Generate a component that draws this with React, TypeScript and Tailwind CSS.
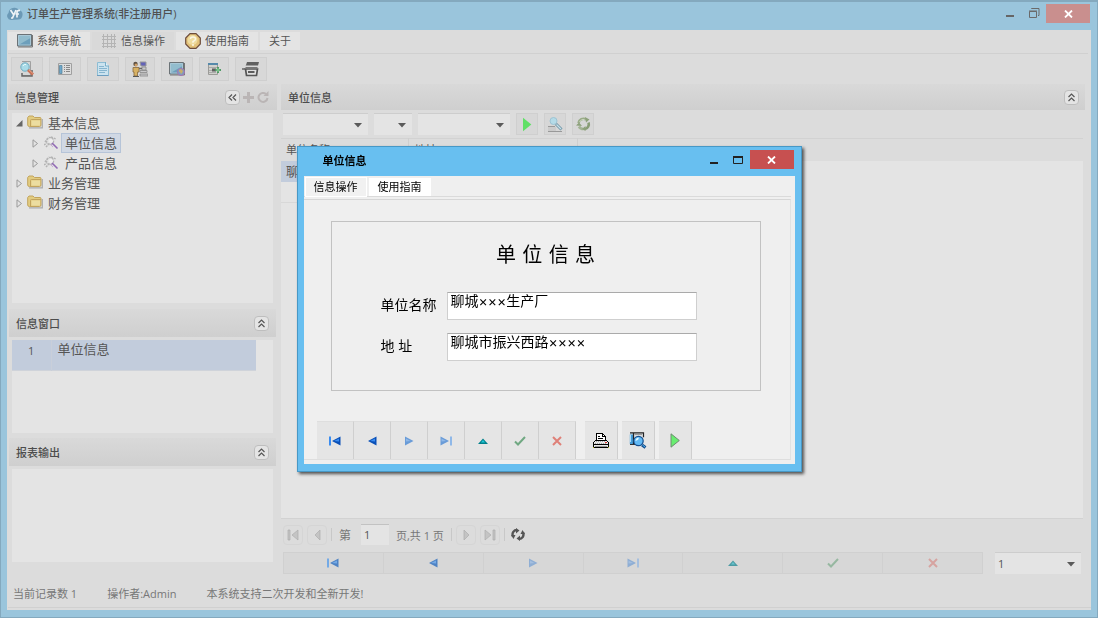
import React from "react";
import clsx from "clsx";

type NavKind = "first" | "prev" | "next" | "last" | "up" | "ok" | "cancel";

const NAV_ITEMS: { kind: NavKind; label: string }[] = [
  { kind: "first", label: "首条" },
  { kind: "prev", label: "上一条" },
  { kind: "next", label: "下一条" },
  { kind: "last", label: "末条" },
  { kind: "up", label: "编辑" },
  { kind: "ok", label: "保存" },
  { kind: "cancel", label: "取消" },
];

const NavIcon: React.FC<{ kind: NavKind; dim?: boolean }> = ({ kind, dim }) => {
  const dark = dim ? "#4f83c4" : "#0a50b8";
  const light = dim ? "#74aae6" : "#3a8cf0";
  const soft = dim ? "#8faed4" : "#6a9cd8";
  const softLight = dim ? "#a5bfdf" : "#8fb8e8";
  return (
    <svg width="12" height="10" viewBox="0 0 12 10">
      {kind === "first" && (
        <>
          <path d="M0 .5h2v9H0z" fill={light} />
          <path d="M11.5.5v9L3 5z" fill={dark} />
          <path d="M10 2.5v3L5 5z" fill={light} />
        </>
      )}
      {kind === "prev" && (
        <>
          <path d="M10.5.5v9L2 5z" fill={dark} />
          <path d="M9 2.5v3L4 5z" fill={light} />
        </>
      )}
      {kind === "next" && (
        <>
          <path d="M2 .5v9L10.5 5z" fill={soft} />
          <path d="M3 2.5v3L7.5 5z" fill={softLight} />
        </>
      )}
      {kind === "last" && (
        <>
          <path d="M.5.5v9L9 5z" fill={soft} />
          <path d="M1.5 2.5v3L6 5z" fill={softLight} />
          <path d="M10 .5h2v9h-2z" fill={softLight} />
        </>
      )}
      {kind === "up" && (
        <>
          <path d="M1 8 6 2.5 11 8z" fill={dim ? "#4d9ba4" : "#00808c"} />
          <path d="M4 6.5 6 4l2 2.5z" fill={dim ? "#66c4cf" : "#20c8d8"} />
        </>
      )}
      {kind === "ok" && (
        <path
          d="M1 5.5 4 8.500 11 1"
          fill="none"
          stroke={dim ? "#97b8a1" : "#70a882"}
          strokeWidth="2"
        />
      )}
      {kind === "cancel" && (
        <path
          d="M2 1l8 8M10 1 2 9"
          fill="none"
          stroke={dim ? "#d6a3a0" : "#df8078"}
          strokeWidth="2"
        />
      )}
    </svg>
  );
};

const SearchDocIcon = () => (
  <svg width="16" height="16" viewBox="0 0 16 16">
    <path d="M3 .5h8.500v14H3" fill="#d4d6d6" stroke="#a0a0a0" />
    <path d="M3 12v3h10V9" fill="none" stroke="#666" strokeWidth="1.500" />
    <circle cx="6" cy="6" r="4.200" fill="#a9dbe8" stroke="#6fabc0" />
    <path d="M4 5a2.500 2.500 0 0 1 3-1.500" stroke="#e6fbff" fill="none" />
    <path d="m9 9 5 4.500" stroke="#ca7157" strokeWidth="3" />
    <path d="m10 9 4 3.500" stroke="#e0a084" />
  </svg>
);

const DetailListIcon = () => (
  <svg width="14" height="12" viewBox="0 0 14 12">
    <path d="M.5.5h13v11H.5z" fill="#ddd" stroke="#a0a0a0" />
    <path d="M1.500 2.500h2.500v8H1.500z" fill="#6ea9cc" stroke="#527e98" strokeWidth=".7" />
    <path
      d="M6 2.500h1m1 0h4M6 4.500h1m1 0h4M6 6.500h1m1 0h4M6 8.500h1m1 0h4"
      stroke="#888"
    />
  </svg>
);

const PageIcon = () => (
  <svg width="14" height="16" viewBox="0 0 14 16">
    <path d="M1.500 1.500h8l3 3v10h-11z" fill="#cbe3ef" stroke="#8dbdd4" />
    <path d="M9.500 1v4H13" fill="#e6f3f8" stroke="#79adc8" />
    <path d="M1 14.500h11.500" stroke="#6d9ec0" />
    <path d="M3 5.500h5M3 7.500h8M3 9.500h8M3 11.500h6" stroke="#86b5cf" />
  </svg>
);

const OperatorIcon = () => (
  <svg width="16" height="16" viewBox="0 0 16 16">
    <path d="M8 1h6v4H9z" fill="#6262b8" stroke="#989898" />
    <path d="M10 6h4v3h-4zM8 9.500h7v2H8zM8 13h8v2H8z" fill="#c8c8ca" stroke="#888" strokeWidth=".8" />
    <circle cx="3.500" cy="3" r="2.200" fill="#5e5144" />
    <circle cx="4" cy="4" r="1.500" fill="#cf9f67" />
    <path d="M1 6.500h6v4.500H5.500v4H2v-4H1z" fill="#d7b163" stroke="#86683e" strokeWidth=".8" />
    <path d="M1 15.500h6" stroke="#555" />
    <path d="M7 7.500h3" stroke="#666" strokeWidth="1.500" />
  </svg>
);

const ScreenIcon: React.FC<{ globe?: boolean }> = ({ globe }) => (
  <svg width="16" height="14" viewBox="0 0 16 14">
    <path d="M.5.5h14v11.500H.5z" fill="#6d9fbb" stroke="#6b7276" />
    <path d="M1.500 11V1.500h12V4z" fill="#92bccd" />
    <path d="M1.500 1.500h12v9.500h-12z" fill="none" stroke="#b5cfdb" strokeWidth=".8" />
    <path d="M1 13h14.500V1" fill="none" stroke="#777" />
    {globe && (
      <>
        <circle cx="12" cy="10" r="3.500" fill="#7c9ec2" stroke="#a773af" />
        <path d="m10 8 2-1 2 2-1 2-1 1-1-2-1-.5z" fill="#c9ae68" />
      </>
    )}
  </svg>
);

const InsertTableIcon = () => (
  <svg width="14" height="14" viewBox="0 0 14 14">
    <path d="M1.500 1.500h9v11h-9z" fill="#d1d1cd" stroke="#9b9b98" />
    <path d="M1 1h10v2H1z" fill="#5689aa" />
    <path d="M2 5.500h8M2 8.500h7M2 10.500h7" stroke="#aaa" />
    <path d="M5 6.500h4v3H5z" fill="#616161" />
    <path d="M11 5v6M8 8h6" stroke="#4f9a65" strokeWidth="2" />
    <path d="M11 6v4M9 8h4" stroke="#9bdba8" strokeWidth=".7" />
  </svg>
);

const ArchiveIcon = () => (
  <svg width="18" height="15" viewBox="0 0 18 15">
    <path d="M4 3 5 0h12l-1 3.500H3.500z" fill="#606060" />
    <path d="M3.500 5.500h12" stroke="#777" />
    <path d="M0 7h3" stroke="#666" strokeWidth="1.500" />
    <path d="M3.500 7h12l-1 6.500h-10z" fill="#e0e0e0" stroke="#555" strokeWidth="1.700" />
    <path d="M6 9h6.500v2H6z" fill="#5c5c5c" />
  </svg>
);

const GridIcon = () => (
  <svg width="14" height="14" viewBox="0 0 14 14" shapeRendering="crispEdges">
    <path
      d="M1.500 0v14M5.500 0v14M9.500 0v14M12.500 0v14M0 2.500h14M0 5.500h14M0 9.500h14M0 12.500h14"
      stroke="#b4b4b4"
    />
  </svg>
);

const HelpIcon = () => (
  <svg width="16" height="16" viewBox="0 0 16 16">
    <path
      d="M5 .7h6L15.300 5v6L11 15.300H5L.7 11V5z"
      fill="#e3c27a"
      stroke="#6d4c3b"
      strokeWidth="1.200"
    />
    <circle cx="7.500" cy="7" r="5" fill="#efdca0" />
    <path d="M5.500 6q0-2 2.500-2t2.500 2q0 1.500-2.500 2.500v1.200" fill="none" stroke="#fbf7e5" strokeWidth="1.500" />
    <circle cx="8" cy="12" r="1" fill="#fbf7e5" />
  </svg>
);

const FolderIcon = () => (
  <svg width="16" height="14" viewBox="0 0 16 14" className="mb-[2px]">
    <path d="M2 12.800h13.300V4" fill="none" stroke="#aaa" strokeWidth="1.200" />
    <path
      d="M.7 10V2.500L2 1h4l1.500 1.500H13q1 0 1 1V10q0 1.500-1.500 1.500h-10Q.7 11.500.7 10z"
      fill="#e2cc81"
      stroke="#c2a45e"
    />
    <path d="M3.500 11V5.500q0-1 1-1H14" fill="none" stroke="#c2a45e" />
    <path d="M4.500 5.500h8.500v5H4.500z" fill="#ecdda0" />
  </svg>
);

const LeafIcon = () => (
  <svg width="15" height="14" viewBox="0 0 15 14">
    <g fill="none" stroke="#b4b4b4" strokeWidth="1.500" strokeDasharray="2 1">
      <circle cx="6" cy="5" r="3.500" />
      <path d="M1 6 5 1m2 0 5 2M2 11l4-4M0 9l3-2" />
    </g>
    <circle cx="7" cy="5" r="2" fill="#eee" />
    <path d="m8 7 5.500 5.500" stroke="#9169b5" strokeWidth="1.600" />
    <path d="m6 8 3 3" stroke="#c7a9d5" />
  </svg>
);

const PlayIcon: React.FC<{ outlined?: boolean }> = ({ outlined }) => (
  <svg width="10" height="15" viewBox="0 0 10 15">
    <path
      d="M1 .8v13.400L9.300 7.500z"
      fill={outlined ? "#68ed70" : "#60e066"}
      stroke={outlined ? "#6e8a70" : "none"}
    />
  </svg>
);

const FindIcon = () => (
  <svg width="15" height="15" viewBox="0 0 15 15">
    <path d="M0 9.500h7M0 14.500h14" stroke="#999" />
    <path d="M0 10h8v4H0z" fill="#cbcbcb" />
    <circle cx="5.500" cy="4" r="3.500" fill="#b4dbe8" stroke="#9dc3d3" />
    <path d="m8 7 5.500 5.500" stroke="#7096a8" strokeWidth="3" />
    <path d="m8.500 7.500 4.500 4.500" stroke="#c5e0e8" strokeWidth="1.300" />
  </svg>
);

const RecycleIcon = () => (
  <svg width="15" height="14" viewBox="0 0 15 14" fill="none">
    <path d="M2.500 6A5 5 0 0 1 10 2.500" stroke="#9aac88" strokeWidth="2.600" />
    <path d="M12.500 5.500A5 5 0 0 1 9 12" stroke="#889c76" strokeWidth="2.600" />
    <path d="M7.500 12A5 5 0 0 1 3 9.500" stroke="#a3b394" strokeWidth="2.600" />
    <path d="m9 0 4.500 2.500L10 5.500zM0 8.500 3 5.500l3 3.500zM9.500 9v5L6 12z" fill="#8da17b" />
    <path d="M3.500 5a4.500 4.500 0 0 1 5-2.500" stroke="#cfd9c5" />
  </svg>
);

const SyncIcon = () => (
  <svg width="14" height="13" viewBox="0 0 14 13" fill="none" stroke="#555" strokeWidth="2.400">
    <path d="M2 8.500C.5 5 3 2 6 2" />
    <path d="M12 4.500c1.500 3.500-1 6.500-4 6.500" />
    <path d="M5 0v5.500l3.500-3zM9 13V7.500l-3.500 3z" fill="#555" stroke="none" />
    <path d="M0 7h4.500L2.500 11zM14 6H9.500l2-4z" fill="#555" stroke="none" />
  </svg>
);

const PrinterIcon = () => (
  <svg width="16" height="16" viewBox="0 0 16 16" shapeRendering="crispEdges">
    <path d="M3.500 7.500v-7h6l3 3v4" fill="#fff" stroke="#000" />
    <path d="M9.500 0v3.500H13M5 3.500h2M5 5.500h5" fill="none" stroke="#000" />
    <path d="M2.500 7.500h11l2 2v5H.5v-5z" fill="#e8e8e8" stroke="#000" />
    <path d="M3 8.500h10M2 10.500h12" stroke="#aaa" strokeDasharray="1 1" />
    <path d="M0 11.500h16M0 14.500h16" stroke="#000" />
    <path d="M12 9.500h2" stroke="#d33" />
    <path d="M2 13h12" stroke="#999" />
    <path d="M0 14.500h1M15 14.500h1" stroke="#b5b520" />
  </svg>
);

const PreviewIcon = () => (
  <svg width="18" height="17" viewBox="0 0 18 17">
    <path d="M1 1h13v11H1z" fill="#d9dcde" />
    <path d="M.8 2.500h3.200V12H.8z" fill="#459bd7" />
    <path d="M1.500 3v7" stroke="#a5dcf8" />
    <path d="M1 .8h13.500v4.500M4.500 1v11" fill="none" stroke="#222" strokeWidth="1.200" />
    <path d="M1 12.500h5" stroke="#333" />
    <path d="M5.500 2.500H13" stroke="#999" />
    <circle cx="9.500" cy="9" r="4.700" fill="#62baf5" stroke="#164f8e" strokeWidth="1.200" />
    <path d="M6.500 9q0-3 3-3.500 1 2-3 3.500z" fill="#e8faff" />
    <path d="m13 13 3.500 2.500" stroke="#164f8e" strokeWidth="3" />
    <path d="m13.500 13 2.500 2" stroke="#54b7f0" />
  </svg>
);

const LogoIcon = () => (
  <svg width="16" height="14" viewBox="0 0 16 14">
    <path d="M4 13a4 4 0 0 1-2.500-7Q2 1 7 .8q3.500-.5 5 2.500 4 .5 3.500 5-.5 4.200-4.500 4.200z" fill="#6b99b6" />
    <path d="m3.500 3 3 4.500M9 3 5.500 11H4M13 3.500q-3-.5-3 2v5M8.500 7H12" fill="none" stroke="#eef3f6" strokeWidth="1.700" />
  </svg>
);

const CloseIcon = () => (
  <svg width="9" height="8" viewBox="0 0 9 8">
    <path d="m1 .5 7 7M8 .5l-7 7" stroke="#fff" strokeWidth="1.800" />
  </svg>
);

const TreeArrow: React.FC<{ open?: boolean }> = ({ open }) => (
  <svg width="7" height="9" viewBox="0 0 7 9" className="shrink-0">
    {open ? (
      <path d="M6.500 1v6.500H0z" fill="#666" />
    ) : (
      <path d="M1 .8v7.400L5.500 4.500z" fill="none" stroke="#999" />
    )}
  </svg>
);

const CollapseButton: React.FC<{ left?: boolean }> = ({ left }) => (
  <button
    aria-label="折叠"
    className="flex size-[15px] items-center justify-center rounded-sm border border-[#bebebe] bg-[#e4e4e4]"
  >
    <svg width="9" height="9" viewBox="0 0 9 9" fill="none" stroke="#555" strokeWidth="1.200">
      <path d={left ? "m4 1.500-3 3 3 3M8 1.500l-3 3 3 3" : "m1.500 4 3-3 3 3m-6 4 3-3 3 3"} />
    </svg>
  </button>
);

const PanelHeader: React.FC<{
  title: string;
  className?: string;
  children?: React.ReactNode;
}> = ({ title, className, children }) => (
  <div
    className={clsx(
      "flex shrink-0 items-center justify-between bg-linear-to-b from-[#d9d9d9] to-[#cfcfcf] pl-[7px]",
      className
    )}
  >
    <h2 className="pt-[2px] font-medium text-[#4c4c4c]">{title}</h2>
    <div className="flex items-center gap-[3px]">{children}</div>
  </div>
);

const Dropdown: React.FC<{ label: string; value?: string; className?: string }> = ({
  label,
  value = "",
  className,
}) => (
  <div className={clsx("relative", className)}>
    <select
      aria-label={label}
      defaultValue={value}
      className="h-[22px] w-full appearance-none border-t border-[#cdcdcd] bg-[#e4e4e4] pl-[3px] text-[#555]"
    >
      <option value={value}>{value}</option>
    </select>
    <svg width="8" height="5" className="pointer-events-none absolute top-[10px] right-[6px]">
      <path d="M0 0h8L4 4.500z" fill="#5a5a5a" />
    </svg>
  </div>
);

const MENU = [
  { label: "系统导航", icon: <ScreenIcon />, width: "w-[82px]" },
  { label: "信息操作", icon: <GridIcon />, width: "w-[82px]", flat: true },
  { label: "使用指南", icon: <HelpIcon />, width: "w-[82px]" },
  { label: "关于", icon: null, width: "w-10" },
];

const TOOLS = [
  { label: "查找", icon: <SearchDocIcon />, width: "w-8" },
  { label: "列表", icon: <DetailListIcon />, width: "w-8" },
  { label: "文档", icon: <PageIcon />, width: "w-8" },
  { label: "操作员", icon: <OperatorIcon />, width: "w-[30px]" },
  { label: "远程", icon: <ScreenIcon globe />, width: "w-8" },
  { label: "插入", icon: <InsertTableIcon />, width: "w-[30px]" },
  { label: "归档", icon: <ArchiveIcon />, width: "w-8" },
];

const TREE = [
  { label: "基本信息", open: true, children: ["单位信息", "产品信息"] },
  { label: "业务管理", open: false, children: [] },
  { label: "财务管理", open: false, children: [] },
];

const Sidebar = () => (
  <aside className="flex w-[269px] shrink-0 flex-col">
    <PanelHeader title="信息管理" className="h-[26px] pr-2">
      <CollapseButton left />
      <button aria-label="添加">
        <svg width="11" height="11">
          <path d="M5.500 0v11M0 5.500h11" stroke="#bab5b5" strokeWidth="3" />
        </svg>
      </button>
      <button aria-label="刷新">
        <svg width="12" height="12" viewBox="0 0 12 12">
          <path d="M9 3a4.500 4.500 0 1 0 1.500 4" fill="none" stroke="#bab5b5" strokeWidth="2" />
          <path d="M11.500 0v5H6.500z" fill="#bab5b5" />
        </svg>
      </button>
    </PanelHeader>
    <ul className="mx-1 mt-[3px] mb-[6px] flex-1 bg-[#e4e4e4] pl-1 text-[13px] text-[#555]">
      {TREE.map((node) => (
        <li key={node.label}>
          <div className="flex h-5 items-center">
            <TreeArrow open={node.open} />
            <span className="mr-[5px] ml-1">
              <FolderIcon />
            </span>
            {node.label}
          </div>
          {node.children.length > 0 && (
            <ul className="pl-4">
              {node.children.map((child, i) => (
                <li key={child} className="flex h-5 items-center">
                  <TreeArrow />
                  <span className="mr-[2px] ml-[5px]">
                    <LeafIcon />
                  </span>
                  <span
                    className={clsx(
                      "border px-[3px] leading-[18px]",
                      i === 0 ? "border-[#b6c4d8] bg-[#d0d8e4]" : "border-transparent"
                    )}
                  >
                    {child}
                  </span>
                </li>
              ))}
            </ul>
          )}
        </li>
      ))}
    </ul>

    <PanelHeader title="信息窗口" className="mx-px h-7 pr-[7px]">
      <CollapseButton />
    </PanelHeader>
    <div className="mx-1 mt-[3px] mb-[5px] h-[93px] bg-[#e4e4e4]">
      <table className="w-[244px] text-left text-[#555]">
        <tbody>
          <tr className="h-[30px] border-b border-[#cfd3da] bg-[#c2ccdc] align-top">
            <td className="w-[39px] border-r border-[#c9cfda] pt-[3px] text-center">1</td>
            <td className="pt-px pl-[6px] text-[13px]">单位信息</td>
          </tr>
        </tbody>
      </table>
    </div>

    <PanelHeader title="报表输出" className="mx-px h-7 pr-[7px]">
      <CollapseButton />
    </PanelHeader>
    <div className="mx-1 mt-[3px] mb-[18px] h-[93px] bg-[#e4e4e4]" />
  </aside>
);

const PagerButton: React.FC<{ label: string; d: string }> = ({ label, d }) => (
  <button
    aria-label={label}
    className="flex size-5 items-center justify-center rounded border border-[#d5d5d5]"
  >
    <svg width="12" height="12" viewBox="0 0 12 12">
      <path d={d} fill="#c4c4c4" stroke="#aeaeae" strokeWidth=".7" />
    </svg>
  </button>
);

const ToolButton: React.FC<{ label: string; children: React.ReactNode }> = ({
  label,
  children,
}) => (
  <button
    aria-label={label}
    className="flex size-[22px] items-center justify-center border border-[#cfcfcf] bg-[#d7d7d7]"
  >
    {children}
  </button>
);

const RecordPanel = () => (
  <main className="mr-[6px] flex min-w-0 flex-1 flex-col">
    <PanelHeader title="单位信息" className="h-[26px] pr-[6px]">
      <CollapseButton />
    </PanelHeader>
    <div className="flex h-7 items-center gap-[6px] pl-[2px]">
      <Dropdown label="字段" className="w-[85px]" />
      <Dropdown label="条件" className="w-[38px]" />
      <Dropdown label="内容" className="w-[92px]" />
      <ToolButton label="执行">
        <PlayIcon />
      </ToolButton>
      <ToolButton label="查询">
        <FindIcon />
      </ToolButton>
      <ToolButton label="重置">
        <RecycleIcon />
      </ToolButton>
    </div>
    <div className="mr-[2px] flex-1 border-b border-[#d2d2d2] bg-[#e4e4e4]">
      <table className="w-full table-fixed text-left text-[#555]">
        <thead>
          <tr className="h-[22px] border-t border-[#d2d2d2] bg-[#dcdcdc]">
            <th className="w-[127px] border-r border-[#cfcfcf] pt-px pl-[5px] font-normal">单位名称</th>
            <th className="w-[169px] border-r border-[#cfcfcf] pt-px pl-[6px] font-normal">地址</th>
            <th />
          </tr>
        </thead>
        <tbody className="text-[13px]">
          <tr className="h-[21px] leading-5">
            <td className="truncate bg-[#c2ccdc] pl-[5px]">聊城×××生产厂</td>
            <td className="truncate bg-[#c2ccdc] pl-[6px]">聊城市振兴西路××××</td>
            <td />
          </tr>
          <tr className="h-[21px]">
            <td className="border-b border-[#d8d8d8]" />
            <td className="border-b border-[#d8d8d8]" />
            <td />
          </tr>
        </tbody>
      </table>
    </div>
    <div className="flex h-[31px] items-center pl-[2px] text-[#777]">
      <div className="flex gap-1">
        <PagerButton label="首页" d="M1 1h2v10H1zM11 1v10L5 6z" />
        <PagerButton label="上页" d="M9 1v10L4 6z" />
      </div>
      <div className="ml-1 h-[13px] border-l border-[#c8c8c8]" />
      <label htmlFor="page" className="ml-[7px] pt-[2px] text-xs">
        第
      </label>
      <input
        id="page"
        defaultValue="1"
        className="mr-[7px] ml-[10px] h-[21px] w-7 border-t border-[#c2c2c2] bg-[#e4e4e4] pb-[2px] pl-[3px] text-[#555]"
      />
      <span className="pt-[2px]">页,共 1 页</span>
      <div className="mr-1 ml-[7px] h-[13px] border-l border-[#c8c8c8]" />
      <div className="flex gap-1">
        <PagerButton label="下页" d="M4 1v10l5-5z" />
        <PagerButton label="末页" d="M1 1v10l6-5zM9 1h2v10H9z" />
      </div>
      <div className="mr-[6px] ml-1 h-[13px] border-l border-[#c8c8c8]" />
      <button aria-label="刷新数据">
        <SyncIcon />
      </button>
    </div>
    <div className="mt-[2px] mb-[6px] flex pl-[2px]">
      <div className="flex flex-1">
        {NAV_ITEMS.map(({ kind, label }) => (
          <button
            key={kind}
            aria-label={label}
            className="flex h-[22px] flex-1 items-center justify-center border border-l-0 border-[#d0d0d0] bg-[#d7d7d7] first:border-l"
          >
            <NavIcon kind={kind} dim />
          </button>
        ))}
      </div>
      <Dropdown label="记录号" value="1" className="mr-1 ml-3 w-[86px]" />
    </div>
  </main>
);

const FIELDS = [
  { id: "company", label: "单位名称", value: "聊城×××生产厂" },
  { id: "address", label: "地 址", value: "聊城市振兴西路××××" },
];

const RecordDialog = () => (
  <div className="fixed inset-0 flex items-center justify-center">
    <section
      role="dialog"
      aria-labelledby="dialog-title"
      className="w-[505px] border border-[#4798c6] bg-[#68bff0] px-[6px] pb-[7px] shadow-[2px_2px_3px_rgba(0,0,0,0.65)]"
    >
      <header className="flex h-[29px] items-start justify-between">
        <h2 id="dialog-title" className="pl-[19px] text-[11px] leading-[27px] font-bold text-black">
          单位信息
        </h2>
        <div className="flex items-start pt-[3px]">
          <button aria-label="最小化" className="flex h-[19px] w-6 items-center justify-center">
            <svg width="8" height="10">
              <path d="M0 7h8v2H0z" fill="#222" />
            </svg>
          </button>
          <button aria-label="最大化" className="flex h-[19px] w-6 items-center justify-center">
            <svg width="10" height="8">
              <path d="M.5 1h9v6.500h-9z" fill="none" stroke="#222" />
              <path d="M0 1h10" stroke="#222" strokeWidth="2" />
            </svg>
          </button>
          <button
            aria-label="关闭"
            className="mr-px flex h-[19px] w-11 items-center justify-center bg-[#c75050]"
          >
            <CloseIcon />
          </button>
        </div>
      </header>
      <div className="bg-[#efefef] pt-[2px] pr-1 pb-1 text-black">
        <div className="flex gap-[3px] border-b border-[#dadada] pl-[2px] text-[11px]">
          <button className="h-[18px] w-[60px] bg-[#f1f1f1] outline outline-white">信息操作</button>
          <button className="h-[18px] w-[62px] bg-white">使用指南</button>
        </div>
        <div className="mt-[2px] border border-l-0 border-t-[#d6d6d6] border-r-[#e2e2e2] border-b-[#dedede]">
          <fieldset className="mt-[21px] mr-[29px] ml-[27px] border border-[#c2c2c2] px-[49px] pb-[29px]">
            <h3 className="mt-[17px] mb-[21px] text-center font-['DejaVu_Sans','Noto_Sans_CJK_SC',sans-serif] text-xl leading-8">
              单 位 信 息
            </h3>
            <div className="flex flex-col gap-[13px]">
              {FIELDS.map(({ id, label, value }) => (
                <div key={id} className="flex items-center">
                  <label htmlFor={id} className="w-[66px] shrink-0 pb-[2px] text-sm">
                    {label}
                  </label>
                  <input
                    id={id}
                    defaultValue={value}
                    className="h-7 w-[250px] border border-[#cfcfcf] border-t-[#aaa] bg-white px-[3px] pb-3 font-[Inter,'Noto_Sans_CJK_SC',sans-serif] text-sm leading-4"
                  />
                </div>
              ))}
            </div>
          </fieldset>
          <div className="mt-[30px] ml-[13px] flex">
            {NAV_ITEMS.map(({ kind, label }) => (
              <button
                key={kind}
                aria-label={label}
                className="flex h-[38px] w-[37px] items-center justify-center border-t border-r border-t-[#dedede] border-r-[#cfcfcf] bg-[#e5e5e5]"
              >
                <NavIcon kind={kind} />
              </button>
            ))}
            <div className="ml-[9px] flex gap-1">
              {[
                { label: "打印", icon: <PrinterIcon /> },
                { label: "预览", icon: <PreviewIcon /> },
                { label: "运行", icon: <PlayIcon outlined /> },
              ].map(({ label, icon }) => (
                <button
                  key={label}
                  aria-label={label}
                  className="flex h-[38px] w-[33px] items-center justify-center border-t border-r border-t-[#dedede] border-r-[#cfcfcf] bg-[#e5e5e5]"
                >
                  {icon}
                </button>
              ))}
            </div>
          </div>
        </div>
      </div>
    </section>
  </div>
);

const App: React.FC = () => {
  return (
    <div className="flex min-h-screen flex-col border border-t-2 border-[#84a9be] bg-[#9ac5dc] px-[6px] pb-[7px] font-['Open_Sans','Noto_Sans_CJK_SC',sans-serif] text-[11px] leading-4">
      <header className="flex h-7 items-start justify-between">
        <div className="flex items-center gap-1 pt-1">
          <LogoIcon />
          <h1 className="font-medium text-[#505050]">订单生产管理系统(非注册用户)</h1>
        </div>
        <div className="flex items-start pt-[2px]">
          <button aria-label="最小化" className="flex h-[19px] w-6 items-center justify-center">
            <svg width="8" height="10">
              <path d="M0 6h8v2H0z" fill="#666" />
            </svg>
          </button>
          <button aria-label="还原" className="flex h-[19px] w-6 items-center justify-center">
            <svg width="11" height="11" fill="none" stroke="#6a6a6a">
              <path d="M.5 3.500h7v6h-7zM0 3h8M2.500 1V.5h7.500v7H9" />
            </svg>
          </button>
          <button
            aria-label="关闭"
            className="mr-px flex h-[19px] w-11 items-center justify-center bg-[#c98f8e]"
          >
            <CloseIcon />
          </button>
        </div>
      </header>

      <div className="flex flex-1 flex-col bg-[#dcdcdc] pl-px">
        <nav className="mr-[3px] flex h-6 items-start gap-[2px] border-b border-[#d0d0d0] pt-[2px]">
          {MENU.map(({ label, icon, width, flat }) => (
            <button
              key={label}
              className={clsx(
                "flex h-[18px] items-center gap-1 text-[#555]",
                width,
                icon ? "pl-[9px]" : "justify-center",
                flat ? "bg-[#d9d9d9]" : "bg-[#e4e4e4]"
              )}
            >
              {icon && <span className="flex w-4 justify-center">{icon}</span>}
              {label}
            </button>
          ))}
        </nav>
        <div className="flex h-[30px] items-center gap-[6px] pl-[3px]">
          {TOOLS.map(({ label, icon, width }) => (
            <button
              key={label}
              aria-label={label}
              className={clsx(
                "flex h-6 items-center justify-center border border-[#cfcfcf] bg-[#d8d8d8]",
                width
              )}
            >
              {icon}
            </button>
          ))}
        </div>
        <div className="flex flex-1 gap-1">
          <Sidebar />
          <RecordPanel />
        </div>
        <footer className="mb-[2px] flex h-7 items-center gap-[30px] border-b border-[#d0d0d0] pl-[5px] text-[#777]">
          <span>当前记录数 1</span>
          <span>操作者:Admin</span>
          <span>本系统支持二次开发和全新开发!</span>
        </footer>
      </div>

      <RecordDialog />
    </div>
  );
};

export default App;
